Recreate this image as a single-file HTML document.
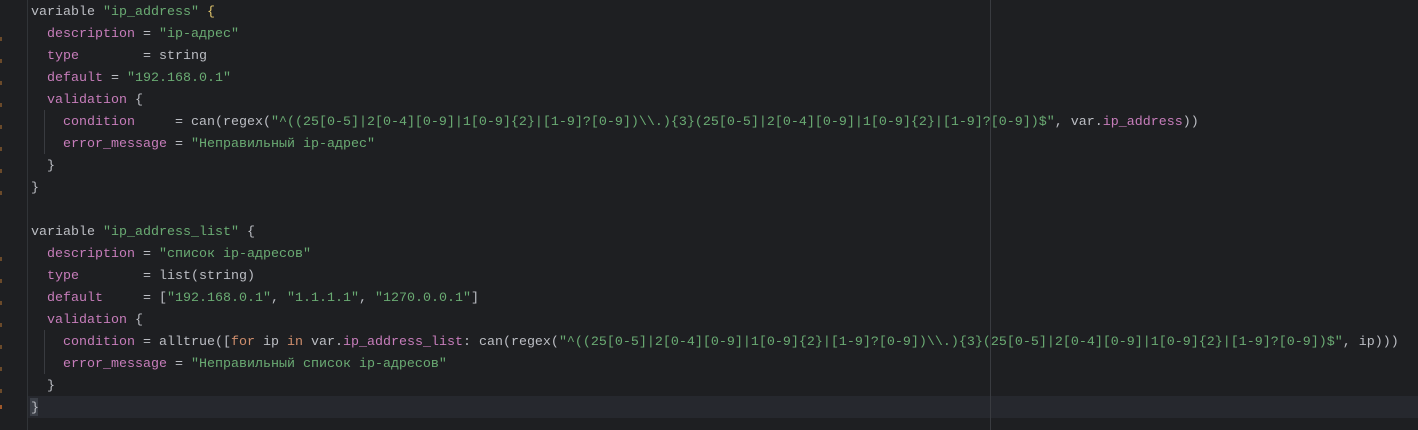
<!DOCTYPE html>
<html><head><meta charset="utf-8"><style>
html,body{margin:0;padding:0;background:#1e1f22;width:1418px;height:430px;overflow:hidden}
#ed{position:relative;width:1418px;height:430px;font-family:"Liberation Mono","DejaVu Sans Mono",monospace;font-size:13.33px;color:#bcbec4}
.l{position:absolute;left:31px;height:22px;line-height:22px;white-space:pre;margin-top:2px}
.k{color:#c77dbb}.s{color:#6aab73}.o{color:#cf8e6d}
.gut{position:absolute;left:27px;top:0;width:1px;height:430px;background:#313438}
.mar{position:absolute;left:990px;top:0;width:1px;height:430px;background:#393b40}
.cur{position:absolute;left:28px;top:396px;width:1390px;height:22px;background:#26282e}
.ig{position:absolute;width:1px;background:#393b40}
.mk{position:absolute;left:0;width:2px;height:4px;background:#6b4a2a}
.bm{position:absolute;left:30px;top:398px;width:8px;height:18px;background:#3b3f47}
</style></head><body><div id="ed">
<div class="cur"></div>
<div class="gut"></div>
<div class="mar"></div>
<div class="ig" style="left:44px;top:110px;height:44px"></div>
<div class="ig" style="left:44px;top:330px;height:44px"></div>
<div class="bm"></div>
<div class="l" style="top:0">variable <span class="s">"ip_address"</span> <span style="color:#e0c46c">{</span></div>
<div class="l" style="top:22px">  <span class="k">description</span> = <span class="s">"ip-адрес"</span></div>
<div class="l" style="top:44px">  <span class="k">type</span>        = string</div>
<div class="l" style="top:66px">  <span class="k">default</span> = <span class="s">"192.168.0.1"</span></div>
<div class="l" style="top:88px">  <span class="k">validation</span> {</div>
<div class="l" style="top:110px">    <span class="k">condition</span>     = can(regex(<span class="s">"^((25[0-5]|2[0-4][0-9]|1[0-9]{2}|[1-9]?[0-9])\\.){3}(25[0-5]|2[0-4][0-9]|1[0-9]{2}|[1-9]?[0-9])$"</span>, var.<span class="k">ip_address</span>))</div>
<div class="l" style="top:132px">    <span class="k">error_message</span> = <span class="s">"Неправильный ip-адрес"</span></div>
<div class="l" style="top:154px">  }</div>
<div class="l" style="top:176px">}</div>
<div class="l" style="top:220px">variable <span class="s">"ip_address_list"</span> {</div>
<div class="l" style="top:242px">  <span class="k">description</span> = <span class="s">"список ip-адресов"</span></div>
<div class="l" style="top:264px">  <span class="k">type</span>        = list(string)</div>
<div class="l" style="top:286px">  <span class="k">default</span>     = [<span class="s">"192.168.0.1"</span>, <span class="s">"1.1.1.1"</span>, <span class="s">"1270.0.0.1"</span>]</div>
<div class="l" style="top:308px">  <span class="k">validation</span> {</div>
<div class="l" style="top:330px">    <span class="k">condition</span> = alltrue([<span class="o">for</span> ip <span class="o">in</span> var.<span class="k">ip_address_list</span>: can(regex(<span class="s">"^((25[0-5]|2[0-4][0-9]|1[0-9]{2}|[1-9]?[0-9])\\.){3}(25[0-5]|2[0-4][0-9]|1[0-9]{2}|[1-9]?[0-9])$"</span>, ip)))</div>
<div class="l" style="top:352px">    <span class="k">error_message</span> = <span class="s">"Неправильный список ip-адресов"</span></div>
<div class="l" style="top:374px">  }</div>
<div class="l" style="top:396px">}</div>
<div class="mk" style="top:37px"></div><div class="mk" style="top:59px"></div><div class="mk" style="top:81px"></div><div class="mk" style="top:103px"></div><div class="mk" style="top:125px"></div><div class="mk" style="top:147px"></div><div class="mk" style="top:169px"></div><div class="mk" style="top:191px"></div>
<div class="mk" style="top:257px"></div><div class="mk" style="top:279px"></div><div class="mk" style="top:301px"></div><div class="mk" style="top:323px"></div><div class="mk" style="top:345px"></div><div class="mk" style="top:367px"></div><div class="mk" style="top:389px"></div><div class="mk" style="top:405px;background:#a0582a"></div>
</div></body></html>
